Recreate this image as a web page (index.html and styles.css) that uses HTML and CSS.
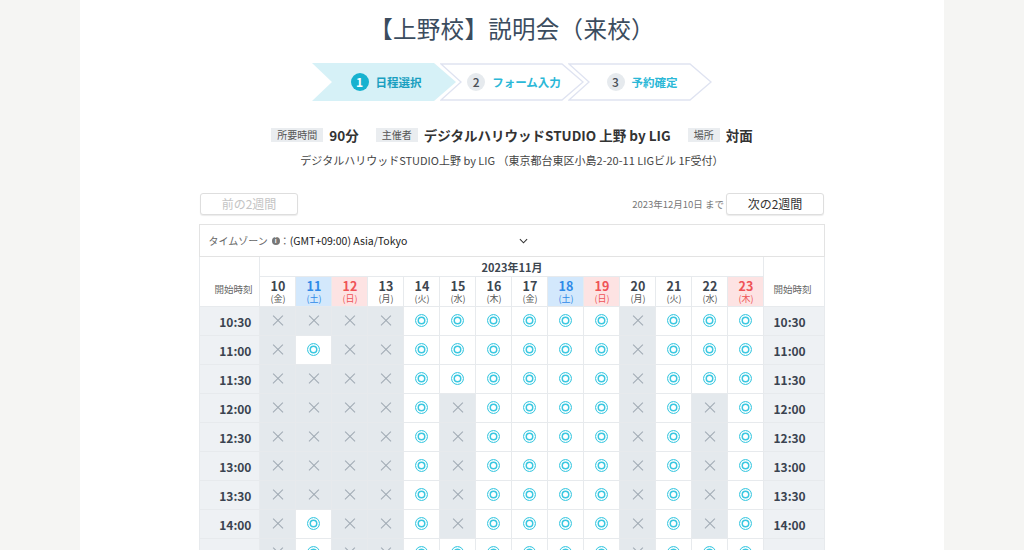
FILE: index.html
```html
<!DOCTYPE html>
<html lang="ja">
<head>
<meta charset="utf-8">
<title>【上野校】説明会（来校）</title>
<link rel="stylesheet" href="styles.css">
</head>
<body>
<div class="panel">
  <h1 class="title">【上野校】説明会（来校）</h1>

  <div class="stepper">
    <div class="step active">
      <svg class="shape" viewBox="0 0 144 38" preserveAspectRatio="none"><polygon points="0,0 122,0 144,19 122,38 0,38 20,19" fill="#d6f1f7"/></svg>
      <span class="num">1</span><span class="label">日程選択</span>
    </div>
    <div class="step">
      <svg class="shape" viewBox="0 0 144 38" preserveAspectRatio="none"><polygon points="1,1 122,1 143,19 122,37 1,37 21,19" fill="#fff" stroke="#dfe3f1" stroke-width="1.3"/></svg>
      <span class="num">2</span><span class="label">フォーム入力</span>
    </div>
    <div class="step">
      <svg class="shape" viewBox="0 0 144 38" preserveAspectRatio="none"><polygon points="1,1 122,1 143,19 122,37 1,37 21,19" fill="#fff" stroke="#dfe3f1" stroke-width="1.3"/></svg>
      <span class="num">3</span><span class="label">予約確定</span>
    </div>
  </div>

  <div class="info">
    <span class="badge">所要時間</span><span class="val">90分</span>
    <span class="badge">主催者</span><span class="val">デジタルハリウッドSTUDIO 上野 by LIG</span>
    <span class="badge">場所</span><span class="val">対面</span>
  </div>
  <p class="address">デジタルハリウッドSTUDIO上野 by LIG （東京都台東区小島2-20-11 LIGビル 1F受付）</p>

  <div class="nav">
    <button class="btn disabled">前の2週間</button>
    <div class="nav-right">
      <span class="until">2023年12月10日 まで</span>
      <button class="btn">次の2週間</button>
    </div>
  </div>

  <table class="cal">
    <colgroup>
      <col class="c-side">
      <col class="c-day"><col class="c-day"><col class="c-day"><col class="c-day"><col class="c-day"><col class="c-day"><col class="c-day">
      <col class="c-day"><col class="c-day"><col class="c-day"><col class="c-day"><col class="c-day"><col class="c-day"><col class="c-day">
      <col class="c-side">
    </colgroup>
    <tr class="tz-row">
      <td colspan="16">
        <div class="tz">
          <span class="tz-label">タイムゾーン</span><span class="info-ic">i</span><span class="colon">：</span>
          <span class="tz-select">(GMT+09:00) Asia/Tokyo<svg class="chev" viewBox="0 0 10 6"><polyline points="1,1 5,5 9,1" fill="none" stroke="#333" stroke-width="1.2"/></svg></span>
        </div>
      </td>
    </tr>
    <tr class="month-row">
      <th rowspan="2" class="side-h left">開始時刻</th>
      <th colspan="14" class="month">2023年11月</th>
      <th rowspan="2" class="side-h right">開始時刻</th>
    </tr>
    <tr class="day-row">
      <th class="day"><b>10</b><small>(金)</small></th>
      <th class="day sat"><b>11</b><small>(土)</small></th>
      <th class="day sun"><b>12</b><small>(日)</small></th>
      <th class="day"><b>13</b><small>(月)</small></th>
      <th class="day"><b>14</b><small>(火)</small></th>
      <th class="day"><b>15</b><small>(水)</small></th>
      <th class="day"><b>16</b><small>(木)</small></th>
      <th class="day"><b>17</b><small>(金)</small></th>
      <th class="day sat"><b>18</b><small>(土)</small></th>
      <th class="day sun"><b>19</b><small>(日)</small></th>
      <th class="day"><b>20</b><small>(月)</small></th>
      <th class="day"><b>21</b><small>(火)</small></th>
      <th class="day"><b>22</b><small>(水)</small></th>
      <th class="day sun"><b>23</b><small>(木)</small></th>
    </tr>
    <tr>
      <td class="time left">10:30</td>
      <td class="x"></td><td class="x"></td><td class="x"></td><td class="x"></td><td class="o"></td><td class="o"></td><td class="o"></td><td class="o"></td><td class="o"></td><td class="o"></td><td class="x"></td><td class="o"></td><td class="o"></td><td class="o"></td>
      <td class="time right">10:30</td>
    </tr>
    <tr>
      <td class="time left">11:00</td>
      <td class="x"></td><td class="o"></td><td class="x"></td><td class="x"></td><td class="o"></td><td class="o"></td><td class="o"></td><td class="o"></td><td class="o"></td><td class="o"></td><td class="x"></td><td class="o"></td><td class="o"></td><td class="o"></td>
      <td class="time right">11:00</td>
    </tr>
    <tr>
      <td class="time left">11:30</td>
      <td class="x"></td><td class="x"></td><td class="x"></td><td class="x"></td><td class="o"></td><td class="o"></td><td class="o"></td><td class="o"></td><td class="o"></td><td class="o"></td><td class="x"></td><td class="o"></td><td class="o"></td><td class="o"></td>
      <td class="time right">11:30</td>
    </tr>
    <tr>
      <td class="time left">12:00</td>
      <td class="x"></td><td class="x"></td><td class="x"></td><td class="x"></td><td class="o"></td><td class="x"></td><td class="o"></td><td class="o"></td><td class="o"></td><td class="o"></td><td class="x"></td><td class="o"></td><td class="x"></td><td class="o"></td>
      <td class="time right">12:00</td>
    </tr>
    <tr>
      <td class="time left">12:30</td>
      <td class="x"></td><td class="x"></td><td class="x"></td><td class="x"></td><td class="o"></td><td class="x"></td><td class="o"></td><td class="o"></td><td class="o"></td><td class="o"></td><td class="x"></td><td class="o"></td><td class="x"></td><td class="o"></td>
      <td class="time right">12:30</td>
    </tr>
    <tr>
      <td class="time left">13:00</td>
      <td class="x"></td><td class="x"></td><td class="x"></td><td class="x"></td><td class="o"></td><td class="x"></td><td class="o"></td><td class="o"></td><td class="o"></td><td class="o"></td><td class="x"></td><td class="o"></td><td class="x"></td><td class="o"></td>
      <td class="time right">13:00</td>
    </tr>
    <tr>
      <td class="time left">13:30</td>
      <td class="x"></td><td class="x"></td><td class="x"></td><td class="x"></td><td class="o"></td><td class="x"></td><td class="o"></td><td class="o"></td><td class="o"></td><td class="o"></td><td class="x"></td><td class="o"></td><td class="x"></td><td class="o"></td>
      <td class="time right">13:30</td>
    </tr>
    <tr>
      <td class="time left">14:00</td>
      <td class="x"></td><td class="o"></td><td class="x"></td><td class="x"></td><td class="o"></td><td class="x"></td><td class="o"></td><td class="o"></td><td class="o"></td><td class="o"></td><td class="x"></td><td class="o"></td><td class="x"></td><td class="o"></td>
      <td class="time right">14:00</td>
    </tr>
    <tr>
      <td class="time left">14:30</td>
      <td class="x"></td><td class="o"></td><td class="x"></td><td class="x"></td><td class="o"></td><td class="o"></td><td class="o"></td><td class="o"></td><td class="o"></td><td class="o"></td><td class="x"></td><td class="o"></td><td class="o"></td><td class="o"></td>
      <td class="time right">14:30</td>
    </tr>
    <tr>
      <td class="time left">15:00</td>
      <td class="x"></td><td class="o"></td><td class="x"></td><td class="x"></td><td class="o"></td><td class="o"></td><td class="o"></td><td class="o"></td><td class="o"></td><td class="o"></td><td class="x"></td><td class="o"></td><td class="o"></td><td class="o"></td>
      <td class="time right">15:00</td>
    </tr>
  </table>
</div>
</body>
</html>
```

FILE: styles.css
```css
html, body {
  margin: 0;
  padding: 0;
  height: 100%;
  overflow: hidden;
}
body {
  background: #f5f5f3;
  font-family: "Noto Sans CJK JP", "Noto Sans", sans-serif;
  color: #333;
}
.panel {
  width: 864px;
  min-height: 100%;
  margin: 0 auto;
  background: #fff;
  display: flex;
  flex-direction: column;
  align-items: center;
}
.title {
  margin: 12px 0 0;
  font-size: 23.5px;
  line-height: 32px;
  font-weight: 400;
  color: #3b4c5e;
  letter-spacing: 0.3px;
}

/* stepper */
.stepper {
  display: flex;
  margin-top: 19px;
  height: 38px;
}
.step {
  position: relative;
  width: 144px;
  height: 38px;
  display: flex;
  align-items: center;
  justify-content: center;
  padding-left: 4px;
  box-sizing: border-box;
}
.step + .step {
  margin-left: -16px;
}
.shape {
  position: absolute;
  left: 0;
  top: 0;
  width: 100%;
  height: 100%;
  z-index: 0;
}
.num {
  position: relative;
  width: 18px;
  height: 18px;
  border-radius: 50%;
  background: #e6eaee;
  color: #4a4f57;
  font-size: 12px;
  font-weight: 500;
  line-height: 18px;
  text-align: center;
  margin-right: 7px;
}
.label {
  position: relative;
  font-size: 11.5px;
  font-weight: 700;
  color: #2bb8d7;
  line-height: 18px;
}
.step.active .num {
  background: #17b2cf;
  color: #fff;
  font-weight: 700;
}
.step.active .label {
  color: #199fc0;
}

/* info */
.info {
  display: flex;
  align-items: center;
  margin-top: 23px;
  height: 22px;
}
.badge {
  background: #eaedf0;
  color: #555;
  font-size: 10px;
  line-height: 14px;
  padding: 0 6px;
  margin-right: 6px;
}
.val {
  font-size: 13.5px;
  font-weight: 700;
  color: #333;
  margin-right: 17px;
  line-height: 22px;
}
.val:last-child {
  margin-right: 0;
}
.address {
  margin: 5px 0 0;
  font-size: 11px;
  line-height: 18px;
  color: #444;
}

/* nav */
.nav {
  width: 624px;
  display: flex;
  justify-content: space-between;
  align-items: center;
  margin-top: 24px;
}
.nav-right {
  display: flex;
  align-items: center;
}
.until {
  font-size: 9.5px;
  color: #777;
  margin-right: 2px;
}
.btn {
  width: 98px;
  height: 22px;
  border: 1px solid #dedede;
  border-radius: 3px;
  background: #fff;
  box-shadow: 0 1px 1px rgba(0,0,0,0.08);
  font-family: inherit;
  font-size: 12px;
  color: #333;
  padding: 0;
  line-height: 20px;
}
.btn.disabled {
  color: #c4c4c4;
}

/* calendar */
.cal {
  margin-top: 9px;
  width: 624px;
  border-collapse: collapse;
  table-layout: fixed;
  border: 1px solid #e3e3e3;
}
.c-side { width: 60px; }
.c-day { width: 36px; }
.cal td, .cal th {
  border: 1px solid #e7eaed;
  padding: 0;
}
.tz-row td {
  height: 31px;
  border-color: #e3e3e3;
}
.tz {
  display: flex;
  align-items: center;
  padding-left: 8px;
  font-size: 10.5px;
}
.tz-label {
  color: #666;
  font-size: 10px;
}
.info-ic {
  display: inline-block;
  width: 8px;
  height: 8px;
  border-radius: 50%;
  background: #777;
  color: #fff;
  font-size: 6px;
  line-height: 8px;
  text-align: center;
  font-weight: 700;
  margin-left: 4px;
}
.colon {
  color: #666;
  font-size: 10px;
  margin-left: 0;
}
.tz-select {
  display: flex;
  align-items: center;
  justify-content: space-between;
  width: 238px;
  color: #222;
  margin-left: 0;
}
.chev {
  width: 9px;
  height: 6px;
}
.month-row th {
  height: 19px;
}
.month {
  font-size: 11px;
  font-weight: 700;
  color: #3d4650;
}
.side-h {
  font-size: 9.5px;
  font-weight: 400;
  color: #666;
  padding-top: 14px !important;
}
.side-h.left {
  text-align: right;
  padding-right: 7px !important;
}
.side-h.right {
  text-align: left;
  padding-left: 9px !important;
}
.day {
  height: 29px;
  color: #3d4650;
  font-weight: 400;
  vertical-align: middle;
}
.day b {
  display: block;
  font-size: 12.5px;
  line-height: 13px;
  font-weight: 700;
}
.day small {
  display: block;
  font-size: 9px;
  line-height: 11px;
  margin-top: 1px;
  color: #555;
}
.day.sat {
  background: #d3e8fc;
  color: #2f8ae8;
}
.day.sat small { color: #2f8ae8; }
.day.sun {
  background: #fde3e3;
  color: #ef5357;
}
.day.sun small { color: #ef5357; }

.cal td.time {
  height: 28px;
  background: #eef1f4;
  border-color: #e7eaed;
  font-size: 12px;
  font-weight: 700;
  color: #3a4350;
}
.time.left {
  text-align: right;
  padding-right: 8px;
}
.time.right {
  text-align: left;
  padding-left: 9px;
}
.cal td.x, .cal td.o {
  position: relative;
  height: 28px;
}
.cal td.x {
  background: #e4e9ed;
}
.cal td.o {
  background: #fff;
}
.x::before, .x::after {
  content: "";
  position: absolute;
  left: 50%;
  top: 50%;
  width: 14px;
  height: 1.2px;
  margin-left: -7px;
  margin-top: -0.6px;
  background: #a0aab4;
  transform: rotate(45deg);
}
.x::after {
  transform: rotate(-45deg);
}
.o::before {
  content: "";
  position: absolute;
  left: 50%;
  top: 50%;
  width: 11px;
  height: 11px;
  margin-left: -7px;
  margin-top: -7px;
  border: 1.5px solid #3bc8e1;
  border-radius: 50%;
  box-shadow: inset 0 0 0 1.5px #fff, inset 0 0 0 3px #3bc8e1;
}
```
